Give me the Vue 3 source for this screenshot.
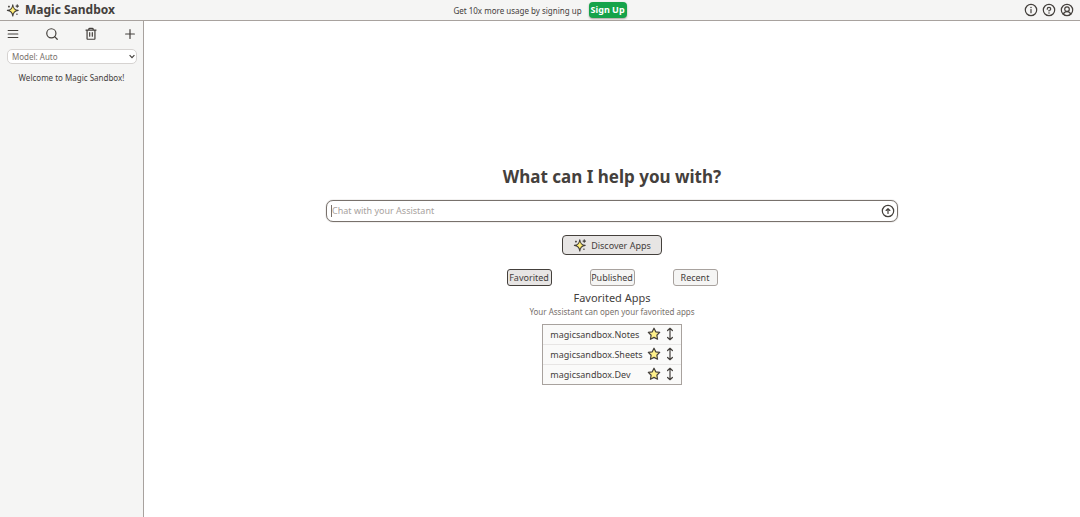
<script setup>
import { ref } from 'vue'

const tabs = ['Favorited', 'Published', 'Recent']
const activeTab = ref('Favorited')
const apps = ['magicsandbox.Notes', 'magicsandbox.Sheets', 'magicsandbox.Dev']
const models = ['Model: Auto']
const message = ref('')
</script>

<template>
  <svg class="defs" aria-hidden="true">
    <symbol id="sparkle" viewBox="0 0 256 256">
      <path class="gold" d="M124 36Q132 126 222 136Q132 146 124 236Q116 146 26 136Q116 126 124 36Z" />
      <path class="gold core" d="M124 84Q130 128 172 136Q130 144 124 188Q118 144 76 136Q118 128 124 84Z" />
      <path d="M206 34v44M184 56h44M54 58v16M46 66h16M196 204h8" />
    </symbol>
  </svg>
  <div class="page">
    <header class="topbar">
      <a class="brand" href="#">
        <svg class="icon"><use href="#sparkle" /></svg>
        <span>Magic Sandbox</span>
      </a>
      <div class="promo">
        <span>Get 10x more usage by signing up</span>
        <button class="signup" type="button">Sign Up</button>
      </div>
      <nav class="links">
        <button class="plain" type="button" aria-label="Information">
          <svg class="icon" viewBox="0 0 256 256"><circle cx="128" cy="128" r="104" /><path d="M128 120v56" /><circle class="dot" cx="128" cy="84" r="14" /></svg>
        </button>
        <button class="plain" type="button" aria-label="Help">
          <svg class="icon" viewBox="0 0 256 256"><circle cx="128" cy="128" r="104" /><path d="M128 144v-8c18 0 32-13 32-28s-14-28-32-28-32 13-32 28v4" /><circle class="dot" cx="128" cy="182" r="14" /></svg>
        </button>
        <button class="plain" type="button" aria-label="Account">
          <svg class="icon" viewBox="0 0 256 256"><circle cx="128" cy="128" r="104" /><circle cx="128" cy="112" r="42" /><path d="M60 204a74 74 0 0 1 136 0" /></svg>
        </button>
      </nav>
    </header>

    <div class="body">
      <aside class="sidebar">
        <div class="tools">
          <button class="plain" type="button" aria-label="Menu">
            <svg class="icon" viewBox="0 0 256 256"><path d="M40 64h176M40 128h176M40 192h176" /></svg>
          </button>
          <button class="plain" type="button" aria-label="Search">
            <svg class="icon" viewBox="0 0 256 256"><circle cx="116" cy="116" r="84" /><path d="M175.400 175.400 224 224" /></svg>
          </button>
          <button class="plain" type="button" aria-label="Delete">
            <svg class="icon" viewBox="0 0 256 256"><path d="M220 56H36M104 104v64M152 104v64M200 56v160a8 8 0 0 1-8 8H64a8 8 0 0 1-8-8V56M168 56V40a16 16 0 0 0-16-16h-48a16 16 0 0 0-16 16v16" /></svg>
          </button>
          <button class="plain" type="button" aria-label="New chat">
            <svg class="icon" viewBox="0 0 256 256"><path d="M48 128h160M128 48v160" /></svg>
          </button>
        </div>
        <div class="model">
          <select aria-label="Model">
            <option v-for="m in models" :key="m">{{ m }}</option>
          </select>
          <svg class="chevron" viewBox="0 0 10 10"><path d="M2 4 5 7 8 4" /></svg>
        </div>
        <p class="welcome">Welcome to Magic Sandbox!</p>
      </aside>

      <main class="main">
        <h1>What can I help you with?</h1>
        <form class="chat" @submit.prevent>
          <span class="caret"></span>
          <input v-model="message" type="text" placeholder="Chat with your Assistant" aria-label="Chat with your Assistant" />
          <button class="plain" type="submit" aria-label="Send">
            <svg class="icon" viewBox="0 0 256 256"><circle cx="128" cy="128" r="104" /><path d="M94 118l34-34 34 34M128 172V88" /></svg>
          </button>
        </form>
        <button class="discover" type="button">
          <svg class="icon"><use href="#sparkle" /></svg>
          <span>Discover Apps</span>
        </button>
        <div class="tabs">
          <button v-for="t in tabs" :key="t" type="button" class="tab" :class="{ active: t === activeTab }" @click="activeTab = t">{{ t }}</button>
        </div>
        <h2>Favorited Apps</h2>
        <p class="hint">Your Assistant can open your favorited apps</p>
        <ul class="apps">
          <li v-for="app in apps" :key="app">
            <a href="#">{{ app }}</a>
            <button class="plain" type="button" :aria-label="'Unfavorite ' + app">
              <svg class="icon" viewBox="0 0 256 256"><path class="gold" d="M128 22 160 88 232 98 180 150 193 224 128 190 63 224 76 150 24 98 96 88Z" /></svg>
            </button>
            <button class="plain" type="button" :aria-label="'Move ' + app">
              <svg class="icon" viewBox="0 0 256 256"><path d="M128 28v200M84 64l44-40 44 40M84 192l44 40 44-40" /></svg>
            </button>
          </li>
        </ul>
      </main>
    </div>
  </div>
</template>

<style>
body {
  background: #fff;
}
</style>

<style scoped>
.page {
  display: flex;
  flex-direction: column;
  min-height: 100vh;
  font-family: "Segoe UI", "Noto Sans", "Open Sans", sans-serif;
  font-size: 8px;
  color: #44403c;
}
.defs {
  position: absolute;
  width: 0;
  height: 0;
}
button,
input,
select {
  font: inherit;
  color: inherit;
  margin: 0;
}
h1,
h2,
p,
ul {
  margin: 0;
  padding: 0;
}
a {
  color: inherit;
  text-decoration: none;
}
.icon {
  display: block;
  flex: none;
  width: 14px;
  height: 14px;
  fill: none;
  stroke: #44403c;
  stroke-width: 22;
  stroke-linecap: round;
  stroke-linejoin: round;
}
.gold {
  fill: #fef08a;
}
.core {
  stroke: #fde047;
  stroke-width: 8;
}
.dot {
  fill: #44403c;
  stroke: none;
}
.plain {
  display: block;
  padding: 0;
  border: 0;
  background: none;
}
.topbar {
  display: grid;
  grid-template-columns: 1fr auto 1fr;
  align-items: center;
  box-sizing: border-box;
  height: 21px;
  padding: 0 6px;
  background: #f5f5f4;
  border-bottom: 1px solid #a8a29e;
}
.brand {
  display: flex;
  align-items: center;
  gap: 5px;
  font-size: 12px;
  line-height: 18px;
  font-weight: 700;
}
.promo {
  display: flex;
  align-items: center;
  gap: 7px;
}
.signup {
  height: 16px;
  padding: 0 2px;
  border: 0;
  border-radius: 4px;
  background: #16a34a;
  color: #fff;
  font-size: 9px;
  font-weight: 700;
  line-height: 16px;
  box-shadow: 0 1px 2px #a8a29e;
}
.links {
  display: flex;
  justify-content: flex-end;
  gap: 4px;
}
.body {
  display: flex;
  flex: 1;
}
.sidebar {
  flex: none;
  box-sizing: border-box;
  width: 144px;
  padding: 6px;
  background: #f5f5f4;
  border-right: 1px solid #a8a29e;
}
.tools {
  display: flex;
  justify-content: space-between;
}
.model {
  position: relative;
  margin: 8px 0 0 1px;
}
.model select {
  display: block;
  box-sizing: border-box;
  width: 100%;
  height: 15px;
  padding: 0 4px;
  appearance: none;
  border: 1px solid #d6d3d1;
  border-radius: 5px;
  background: #fff;
  color: #78716c;
  line-height: 13px;
}
.chevron {
  position: absolute;
  top: 3px;
  right: 1px;
  width: 8px;
  height: 8px;
  fill: none;
  stroke: #44403c;
  stroke-width: 1.5;
  pointer-events: none;
}
.welcome {
  margin-top: 8px;
  line-height: 12px;
  text-align: center;
}
.main {
  display: flex;
  flex: 1;
  flex-direction: column;
  align-items: center;
  justify-content: center;
  padding: 12px 16px 0;
}
h1 {
  font-size: 17px;
  line-height: 24px;
  font-weight: 700;
}
.chat {
  position: relative;
  display: flex;
  align-items: center;
  box-sizing: border-box;
  width: 100%;
  max-width: 572px;
  height: 22px;
  margin-top: 11px;
  padding: 0 2px 0 5px;
  border: 1px solid #78716c;
  border-radius: 7px;
  box-shadow: 0 0 1px #78716c;
}
.chat input {
  flex: 1;
  min-width: 0;
  height: 18px;
  padding: 0 0 2px;
  box-sizing: border-box;
  border: 0;
  outline: 0;
  background: none;
  font-size: 9px;
}
.chat input::placeholder {
  color: #a8a29e;
}
.caret {
  position: absolute;
  left: 4px;
  top: 4px;
  width: 1px;
  height: 12px;
  background: #78716c;
}
.discover {
  display: flex;
  align-items: center;
  gap: 4px;
  height: 20px;
  margin-top: 13px;
  padding: 0 10px;
  border: 1px solid #44403c;
  border-radius: 4px;
  background: #e7e5e4;
  font-size: 9px;
}
.tabs {
  display: flex;
  gap: 38px;
  margin-top: 14px;
}
.tab {
  box-sizing: border-box;
  width: 45px;
  height: 17px;
  padding: 0;
  border: 1px solid #a8a29e;
  border-radius: 3px;
  background: #f5f5f4;
  font-size: 9px;
  line-height: 15px;
  white-space: nowrap;
}
.tab.active {
  border-color: #44403c;
  background: #e7e5e4;
}
h2 {
  margin-top: 5px;
  font-size: 11px;
  line-height: 14px;
  font-weight: 400;
}
.hint {
  color: #78716c;
  line-height: 14px;
}
.apps {
  margin-top: 5px;
  list-style: none;
  border: 1px solid #a8a29e;
  background: #fafaf9;
}
.apps li {
  display: flex;
  align-items: center;
  box-sizing: border-box;
  gap: 2px;
  height: 19px;
  padding: 0 4px 1px 7px;
  font-size: 9px;
}
.apps li + li {
  height: 20px;
  border-top: 1px solid #e7e5e4;
}
.apps a {
  flex: 1;
  margin-right: 2px;
}
</style>
